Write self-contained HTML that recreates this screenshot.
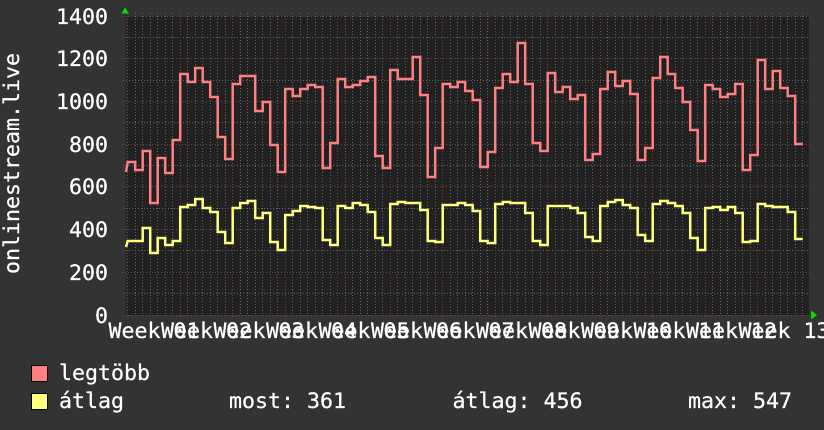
<!DOCTYPE html>
<html>
<head>
<meta charset="utf-8">
<title>onlinestream.live</title>
<style>
html,body{margin:0;padding:0;background:#333333;width:824px;height:430px;overflow:hidden}
svg{display:block}
text{font-family:"DejaVu Sans Mono","Liberation Mono",monospace;font-size:21.6px;fill:#ffffff;stroke:#ffffff;stroke-width:.25px}
</style>
</head>
<body>
<svg xmlns="http://www.w3.org/2000/svg" width="824" height="430" viewBox="0 0 824 430">
<rect width="824" height="430" fill="#333333"/>
<rect x="125" y="16" width="684" height="299" fill="#212121"/>
<rect x="125" y="16" width="2" height="299" fill="#2a2a2a"/>

<!-- minor verticals -->
<path fill="none" stroke="#666666" stroke-width="1" stroke-dasharray="1 2" d="M135.5 13V315M142.5 13V315M150.5 13V315M157.5 13V315M165.5 13V315M172.5 13V315M187.5 13V315M195.5 13V315M202.5 13V315M210.5 13V315M217.5 13V315M225.5 13V315M240.5 13V315M247.5 13V315M255.5 13V315M262.5 13V315M270.5 13V315M277.5 13V315M292.5 13V315M300.5 13V315M307.5 13V315M315.5 13V315M322.5 13V315M330.5 13V315M345.5 13V315M352.5 13V315M360.5 13V315M367.5 13V315M375.5 13V315M382.5 13V315M397.5 13V315M405.5 13V315M412.5 13V315M420.5 13V315M427.5 13V315M435.5 13V315M450.5 13V315M457.5 13V315M465.5 13V315M472.5 13V315M480.5 13V315M487.5 13V315M502.5 13V315M510.5 13V315M517.5 13V315M525.5 13V315M532.5 13V315M540.5 13V315M555.5 13V315M562.5 13V315M570.5 13V315M577.5 13V315M585.5 13V315M592.5 13V315M607.5 13V315M615.5 13V315M622.5 13V315M630.5 13V315M637.5 13V315M645.5 13V315M660.5 13V315M667.5 13V315M675.5 13V315M682.5 13V315M690.5 13V315M697.5 13V315M712.5 13V315M720.5 13V315M727.5 13V315M735.5 13V315M742.5 13V315M750.5 13V315M765.5 13V315M772.5 13V315M780.5 13V315M787.5 13V315M795.5 13V315M802.5 13V315"/>
<!-- minor horizontals -->
<path fill="none" stroke="#666666" stroke-width="1" stroke-dasharray="1 2" d="M123 37.5H810M123 80.5H810M123 122.5H810M123 165.5H810M123 208.5H810M123 250.5H810M123 293.5H810"/>
<!-- major verticals -->
<path fill="none" stroke="#7a4444" stroke-width="1" stroke-dasharray="1 2" d="M127.5 13V318M180.5 13V318M232.5 13V318M285.5 13V318M337.5 13V318M390.5 13V318M442.5 13V318M495.5 13V318M547.5 13V318M600.5 13V318M652.5 13V318M705.5 13V318M757.5 13V318"/>
<!-- major horizontals -->
<path fill="none" stroke="#7a4444" stroke-width="1" stroke-dasharray="1 2" d="M122 16.5H811M122 58.5H811M122 101.5H811M122 144.5H811M122 186.5H811M122 229.5H811M122 272.5H811M122 315.5H811"/>

<!-- arrows -->
<polygon points="121.5,13.5 129,13.5 125,7.5" fill="#00e000"/>
<polygon points="811,310.5 811,319.5 817,315" fill="#00e000"/>

<!-- data -->
<path fill="none" stroke="#ff8080" stroke-width="2.5" stroke-linejoin="miter" d="M126 172L127.7 162h7.5V170h7.5V151h7.5V203h7.5V158h7.5V173h7.5V140h7.5V74h7.5V82h7.5V68h7.5V82h7.5V97h7.5V137h7.5V159h7.5V84h7.5V76h7.5V76h7.5V111h7.5V102h7.5V145h7.5V172h7.5V89h7.5V96h7.5V89h7.5V85h7.5V87h7.5V168h7.5V143h7.5V79h7.5V87h7.5V85h7.5V81h7.5V77h7.5V156h7.5V168h7.5V70h7.5V79h7.5V79h7.5V57h7.5V95h7.5V177h7.5V148h7.5V84h7.5V87h7.5V82h7.5V91h7.5V100h7.5V167h7.5V152h7.5V88h7.5V74h7.5V82h7.5V43h7.5V84h7.5V143h7.5V151h7.5V73h7.5V92h7.5V87h7.5V99h7.5V95h7.5V160h7.5V154h7.5V89h7.5V72h7.5V86h7.5V81h7.5V94h7.5V160h7.5V148h7.5V78h7.5V57h7.5V74h7.5V88h7.5V102h7.5V130h7.5V161h7.5V85h7.5V89h7.5V97h7.5V94h7.5V84h7.5V170h7.5V155h7.5V60h7.5V89h7.5V71h7.5V88h7.5V96h7.5V144h7.5"/>
<path fill="none" stroke="#ffff80" stroke-width="2.5" stroke-linejoin="miter" d="M126 247L127.7 241h7.5V241h7.5V228h7.5V253h7.5V238h7.5V245h7.5V241h7.5V207h7.5V205h7.5V199h7.5V208h7.5V212h7.5V232h7.5V243h7.5V208h7.5V203h7.5V201h7.5V218h7.5V213h7.5V242h7.5V250h7.5V215h7.5V211h7.5V206h7.5V207h7.5V208h7.5V240h7.5V245h7.5V206h7.5V208h7.5V203h7.5V205h7.5V212h7.5V238h7.5V245h7.5V204h7.5V202h7.5V203h7.5V203h7.5V210h7.5V241h7.5V242h7.5V205h7.5V205h7.5V203h7.5V205h7.5V211h7.5V241h7.5V243h7.5V204h7.5V202h7.5V203h7.5V203h7.5V213h7.5V241h7.5V245h7.5V206h7.5V206h7.5V206h7.5V208h7.5V213h7.5V237h7.5V241h7.5V206h7.5V202h7.5V200h7.5V205h7.5V208h7.5V235h7.5V241h7.5V204h7.5V201h7.5V203h7.5V206h7.5V213h7.5V238h7.5V250h7.5V208h7.5V207h7.5V210h7.5V207h7.5V213h7.5V242h7.5V241h7.5V204h7.5V206h7.5V207h7.5V207h7.5V212h7.5V239h7.5"/>

<!-- y labels -->
<g text-anchor="end">
<text x="108" y="24">1400</text>
<text x="108" y="66">1200</text>
<text x="108" y="109">1000</text>
<text x="108" y="152">800</text>
<text x="108" y="194">600</text>
<text x="108" y="237">400</text>
<text x="108" y="280">200</text>
<text x="108" y="323">0</text>
</g>
<text transform="translate(19,274) rotate(-90)">onlinestream.live</text>

<!-- x labels -->
<g>
<text x="108.5" y="338">Week 01</text>
<text x="161" y="338">Week 02</text>
<text x="213.5" y="338">Week 03</text>
<text x="266" y="338">Week 04</text>
<text x="318.5" y="338">Week 05</text>
<text x="371" y="338">Week 06</text>
<text x="423.5" y="338">Week 07</text>
<text x="476" y="338">Week 08</text>
<text x="528.5" y="338">Week 09</text>
<text x="581" y="338">Week 10</text>
<text x="633.5" y="338">Week 11</text>
<text x="686" y="338">Week 12</text>
<text x="738.5" y="338">Week 13</text>
</g>

<!-- legend -->
<rect x="31.5" y="365.5" width="16" height="16" fill="#ff8080" stroke="#000000" stroke-width="1"/>
<rect x="31.5" y="393.5" width="16" height="16" fill="#ffff80" stroke="#000000" stroke-width="1"/>
<text x="59" y="380">legtöbb</text>
<text x="59" y="408">átlag</text>
<text x="229" y="408">most: 361</text>
<text x="452.5" y="408">átlag: 456</text>
<text x="688" y="408">max: 547</text>
</svg>
</body>
</html>
